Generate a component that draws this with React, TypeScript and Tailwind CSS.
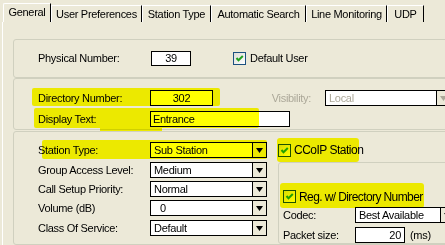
import React from 'react';

const Check = () => (
  <div className="w-[13px] h-[13px] shrink-0 border border-[#1C5180] bg-linear-to-br from-[#DCDCD7] to-white flex items-center justify-center">
    <svg width="11" height="11" viewBox="0 0 11 11">
      <path d="M2.5 5 L4.5 7.3 L8.8 3" fill="none" stroke="#21A121" strokeWidth="2" />
    </svg>
  </div>
);

const Arrow = ({ color = '#000' }: { color?: string }) => (
  <svg width="7" height="5" viewBox="0 0 7 5">
    <polygon points="0,0 7,0 3.5,5" fill={color} />
  </svg>
);

interface SelectProps {
  value: string;
  className: string;
  textClass?: string;
  disabled?: boolean;
}

const Select: React.FC<SelectProps> = ({ value, className, textClass = 'pl-[3px]', disabled }) => (
  <div className={`h-[16px] flex shrink-0 border border-black bg-white ${className}`}>
    <span className={`flex-1 leading-[14px] whitespace-nowrap overflow-hidden ${textClass} ${disabled ? 'text-[#ACA899]' : ''}`}>{value}</span>
    <span className="w-[14px] shrink-0 border-l border-black bg-[#ECE9D8] flex items-center justify-center">
      <Arrow color={disabled ? '#ACA899' : '#000'} />
    </span>
  </div>
);

const tabs = [
  { label: 'User Preferences', w: 'w-[91px]' },
  { label: 'Station Type', w: 'w-[69px]' },
  { label: 'Automatic Search', w: 'w-[95px]' },
  { label: 'Line Monitoring', w: 'w-[81px]' },
  { label: 'UDP', w: 'w-[37px]' },
];

const rows = [
  { label: 'Station Type:', value: 'Sub Station', mt: 'mt-0', text: 'pl-[3px]' },
  { label: 'Group Access Level:', value: 'Medium', mt: 'mt-[4px]', text: 'pl-[3px]' },
  { label: 'Call Setup Priority:', value: 'Normal', mt: 'mt-[3px]', text: 'pl-[3px]' },
  { label: 'Volume (dB)', value: '0', mt: 'mt-[3px]', text: 'pl-[9px]' },
  { label: 'Class Of Service:', value: 'Default', mt: 'mt-[4px]', text: 'pl-[3px]' },
];

export default function App() {
  return (
    <div className="relative w-[445px] h-[245px] overflow-hidden bg-[#ECE9D8] font-['Liberation_Sans',Arial,sans-serif] text-[11px] tracking-[-0.3px] text-black">
      {/* tab strip */}
      <div className="h-[22px] flex items-end pl-[3px]">
        <div className="w-[48px] h-[19px] border-t border-l border-r border-t-white border-l-white border-r-black rounded-tl-[2px] flex justify-center pt-[2px] leading-[13px]">
          General
        </div>
        {tabs.map((t) => (
          <div
            key={t.label}
            className={`${t.w} h-[17px] border-t border-l border-r border-t-white border-l-white border-r-black flex justify-center pt-[2px] leading-[13px] whitespace-nowrap`}
          >
            {t.label}
          </div>
        ))}
      </div>

      {/* panel */}
      <div className="ml-[2px] h-[223px] border-l border-white pl-[10px] pt-[17px] flex flex-col">
        {/* group 1 */}
        <div className="w-[440px] h-[39px] shrink-0 border border-[#D0D0BF] rounded-[3px] pl-[24px] pt-[11px]">
          <div className="flex items-center h-[15px]">
            <span className="w-[113px]">Physical Number:</span>
            <div className="w-[40px] h-[15px] border border-black bg-white text-center leading-[13px]">39</div>
            <div className="ml-[42px]"><Check /></div>
            <span className="ml-[4px]">Default User</span>
          </div>
        </div>

        {/* group 2 */}
        <div className="w-[440px] h-[52px] shrink-0 border border-[#D0D0BF] rounded-[3px] pl-[24px] pt-[11px]">
          <div className="flex items-center h-[16px]">
            <span className="w-[112px]">Directory Number:</span>
            <div className="w-[63px] h-[16px] border border-black bg-white text-center leading-[14px]">302</div>
            <span className="w-[98px] text-right text-[#ACA899]">Visibility:</span>
            <Select value="Local" className="ml-[14px] w-[126px]" disabled />
          </div>
          <div className="flex items-center h-[16px] mt-[5px]">
            <span className="w-[112px]">Display Text:</span>
            <div className="w-[140px] h-[16px] border border-black bg-white pl-[2px] leading-[14px]">Entrance</div>
          </div>
        </div>

        {/* group 3 */}
        <div className="mt-[1px] w-[440px] flex-1 border border-[#D0D0BF] rounded-[3px] pl-[24px] pt-[10px] flex">
          <div className="flex flex-col">
            {rows.map((r) => (
              <div key={r.label} className={`flex items-center h-[16px] ${r.mt}`}>
                <span className="w-[112px] whitespace-nowrap">{r.label}</span>
                <Select value={r.value} className="w-[117px]" textClass={r.text} />
              </div>
            ))}
          </div>
          <div className="ml-[11px] flex flex-col">
            <div className="flex items-center h-[16px]">
              <Check />
              <span className="ml-[3px] text-[12px] tracking-[-0.5px]">CCoIP Station</span>
            </div>
            <div className="mt-[4px] w-[200px] flex-1 border border-[#D0D0BF] rounded-[3px] pl-[4px] pt-[27px]">
              <div className="flex items-center h-[13px]">
                <Check />
                <span className="ml-[3px] text-[12px] tracking-[-0.6px]">Reg. w/ Directory Number</span>
              </div>
              <div className="flex items-center h-[16px] mt-[4px]">
                <span className="w-[72px]">Codec:</span>
                <Select value="Best Available" className="w-[100px]" />
              </div>
              <div className="flex items-center h-[16px] mt-[4px]">
                <span className="w-[72px]">Packet size:</span>
                <div className="w-[50px] h-[16px] border border-black bg-white text-right pr-[3px] leading-[14px]">20</div>
                <span className="ml-[5px]">(ms)</span>
              </div>
            </div>
          </div>
        </div>
      </div>

      {/* highlighter marks */}
      <div className="absolute left-[32px] top-[88px] w-[188px] h-[18px] bg-[#FFFF00] mix-blend-multiply rounded-[2px]" />
      <div className="absolute left-[34px] top-[108px] w-[225px] h-[20px] bg-[#FFFF00] mix-blend-multiply rounded-[2px]" />
      <div className="absolute left-[100px] top-[127px] w-[62px] h-[4px] bg-[#FFFF00] mix-blend-multiply" />
      <div className="absolute left-[42px] top-[140px] w-[225px] h-[19px] bg-[#FFFF00] mix-blend-multiply rounded-[2px]" />
      <div className="absolute left-[277px] top-[138px] w-[82px] h-[24px] bg-[#FFFF00] mix-blend-multiply rounded-[3px]" />
      <div className="absolute left-[280px] top-[183px] w-[144px] h-[25px] bg-[#FFFF00] mix-blend-multiply rounded-[3px]" />
    </div>
  );
}
